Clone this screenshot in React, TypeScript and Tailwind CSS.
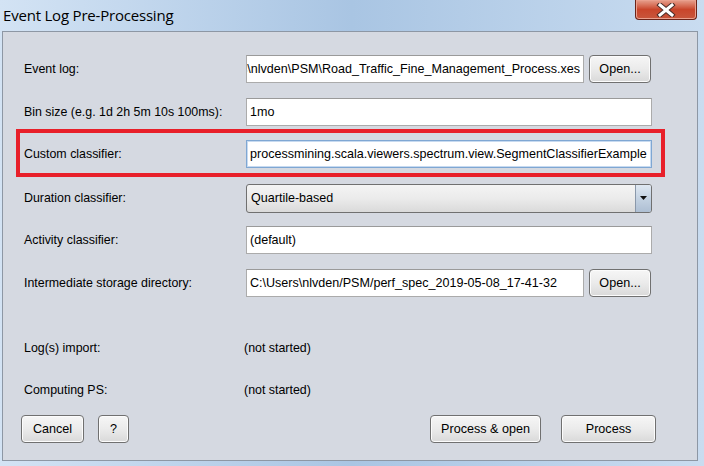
import React from "react";

const font = { fontFamily: '"Liberation Sans", Arial, sans-serif' };

function Btn({ children, className = "" }: { children: React.ReactNode; className?: string }) {
  return (
    <div
      className={
        "flex h-[28px] shrink-0 items-center justify-center rounded-[4px] border border-[#707070] bg-gradient-to-b from-[#f6f6f6] via-[#ebebeb] to-[#d9d9d9] text-[12.6px] text-black shadow-[inset_0_0_0_1px_#fcfcfc] " +
        className
      }
    >
      {children}
    </div>
  );
}

function Field({ children, className = "", focused = false, right = false }: { children?: React.ReactNode; className?: string; focused?: boolean; right?: boolean }) {
  return (
    <div
      className={
        "flex h-[28px] min-w-0 shrink-0 items-center overflow-hidden whitespace-nowrap bg-white text-[12.55px] text-black " +
        (focused ? "border border-[#7fa7d3] shadow-[inset_0_0_0_1px_#c7daf0] " : "border border-[#ababab] border-t-[#9a9a9a] ") +
        (right ? "justify-end pr-[3px] " : "pl-[3px] ") +
        className
      }
    >
      {children}
    </div>
  );
}

function Row({ label, children, className = "" }: { label: string; children: React.ReactNode; className?: string }) {
  return (
    <div className={"flex h-[28px] shrink-0 items-center " + className}>
      <div className="w-[243px] shrink-0 whitespace-nowrap pl-[21px] text-[12.4px] text-black">{label}</div>
      {children}
    </div>
  );
}

export default function App() {
  return (
    <div className="relative flex h-[466px] w-[704px] flex-col overflow-hidden bg-gradient-to-r from-[#d3e3f4] via-[#a9c5e3] to-[#c9dcf0]" style={font}>
      {/* title bar */}
      <div className="relative flex h-[31px] shrink-0 items-center pl-[3px]">
        <span className="text-[15px] text-black" style={{ fontFamily: '"Open Sans", "Noto Sans", sans-serif', letterSpacing: "-0.2px" }}>
          Event Log Pre-Processing
        </span>
        <div className="absolute right-[7px] top-0 flex h-[20px] w-[62px] items-center justify-center rounded-b-[4px] border border-t-0 border-[#6b2318] bg-gradient-to-b from-[#e6a08e] via-[#c9452b] to-[#c8563c] shadow-[inset_0_0_0_1px_#eaa08e]">
          <svg width="20" height="14" viewBox="0 0 20 14">
            <path d="M4 2 L16 12 M16 2 L4 12" stroke="#4a2c28" strokeWidth="5" strokeLinecap="square" />
            <path d="M4 2 L16 12 M16 2 L4 12" stroke="#ffffff" strokeWidth="3" strokeLinecap="square" />
          </svg>
        </div>
      </div>

      {/* panel */}
      <div className="mb-[5px] ml-[2px] mr-[6px] flex flex-1 flex-col border border-[#8d97a4] bg-[#d5d9e1] pt-[23px]">
        <Row label="Event log:">
          <Field right className="w-[338px]">C:\Users\nlvden\PSM\Road_Traffic_Fine_Management_Process.xes</Field>
          <Btn className="ml-[5px] w-[62px]">Open...</Btn>
        </Row>
        <Row label="Bin size (e.g. 1d 2h 5m 10s 100ms):" className="mt-[15px]">
          <Field className="w-[406px]">1mo</Field>
        </Row>
        <Row label="Custom classifier:" className="mt-[14px]">
          <Field focused className="w-[406px]">processmining.scala.viewers.spectrum.view.SegmentClassifierExample</Field>
        </Row>
        <Row label="Duration classifier:" className="mt-[16px]">
          <div className="flex h-[29px] w-[406px] shrink-0 overflow-hidden rounded-[3px] border border-[#707070] bg-gradient-to-b from-[#f4f4f4] via-[#ebebeb] to-[#dadada]">
            <div className="flex flex-1 items-center pl-[4px] text-[12.55px]">Quartile-based</div>
            <div className="flex w-[16px] items-center justify-center border-l border-[#8a98aa] bg-gradient-to-b from-[#dfe8f2] via-[#c4d2e2] to-[#aebfd3]">
              <svg width="7" height="4" viewBox="0 0 7 4">
                <path d="M0 0 L7 0 L3.5 4 Z" fill="#111" />
              </svg>
            </div>
          </div>
        </Row>
        <Row label="Activity classifier:" className="mt-[14px]">
          <Field className="w-[406px]">(default)</Field>
        </Row>
        <Row label="Intermediate storage directory:" className="mt-[15px]">
          <Field className="w-[338px]">C:\Users\nlvden/PSM/perf_spec_2019-05-08_17-41-32</Field>
          <Btn className="ml-[5px] w-[62px]">Open...</Btn>
        </Row>
        <div className="mt-[43px] flex h-[16px] shrink-0 items-center text-[12.4px]">
          <div className="w-[241px] shrink-0 pl-[21px]">Log(s) import:</div>
          <div>(not started)</div>
        </div>
        <div className="mt-[26px] flex h-[16px] shrink-0 items-center text-[12.4px]">
          <div className="w-[241px] shrink-0 pl-[21px]">Computing PS:</div>
          <div>(not started)</div>
        </div>
        <div className="mt-[17px] flex shrink-0 items-center pl-[18px]">
          <Btn className="w-[63px]">Cancel</Btn>
          <Btn className="ml-[14px] w-[31px]">?</Btn>
          <Btn className="ml-[301px] w-[111px]">Process &amp; open</Btn>
          <Btn className="ml-[20px] w-[95px]">Process</Btn>
        </div>
      </div>

      {/* red annotation box */}
      <div className="pointer-events-none absolute left-[16px] top-[129px] h-[48px] w-[649px] border-[4px] border-[#e8202a]" />
    </div>
  );
}
